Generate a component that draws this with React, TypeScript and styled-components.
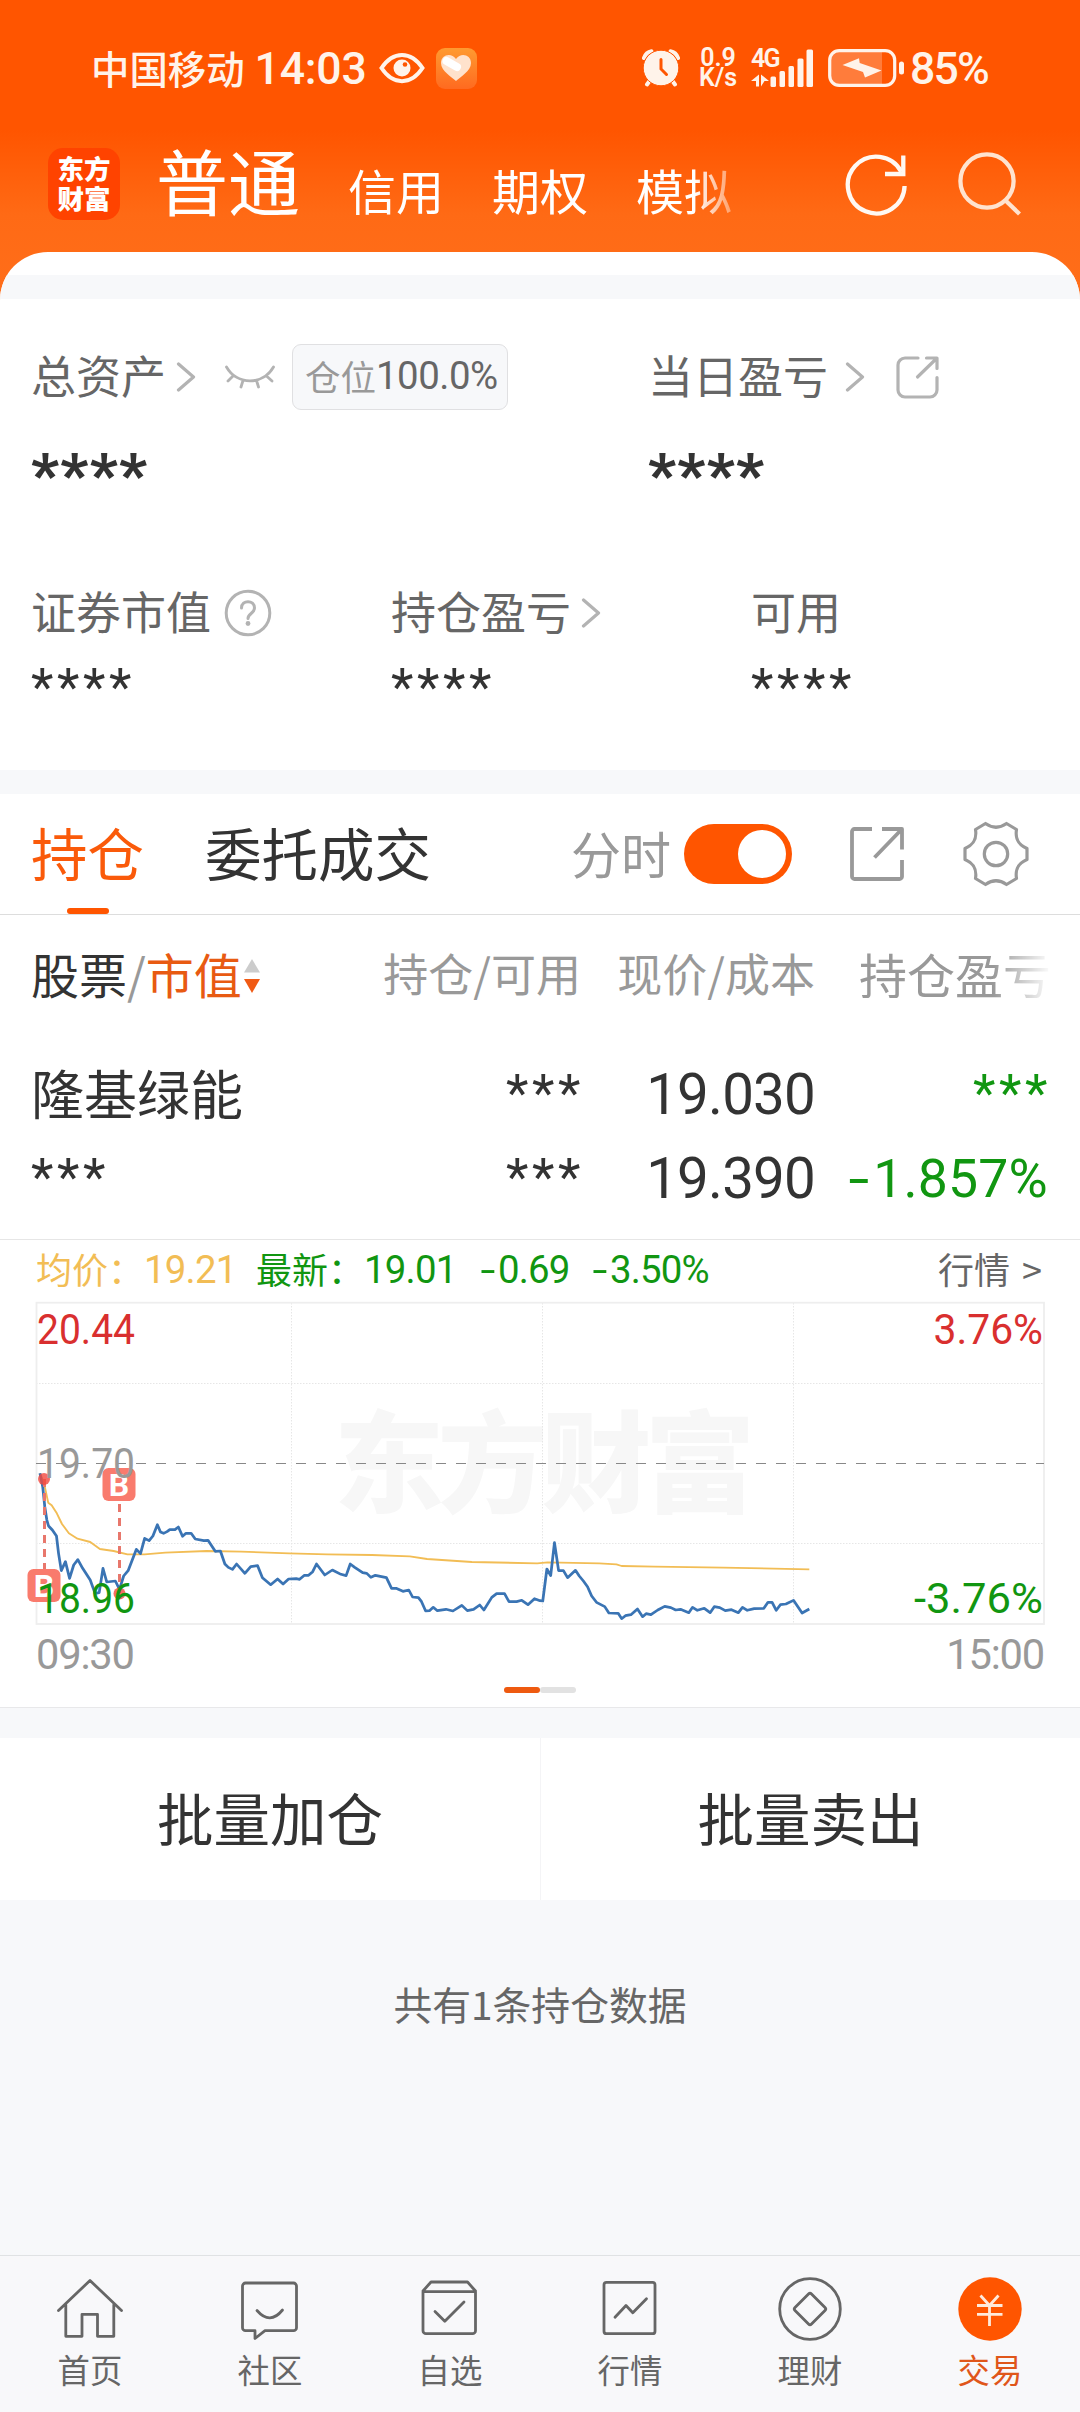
import React from "react";
import styled, { createGlobalStyle } from "styled-components";

const CJK = `"Noto Sans CJK SC", "Noto Sans", sans-serif`;
const NUM = `Roboto, "Noto Sans CJK SC", sans-serif`;

const c = {
  brand: "#ff5500",
  ink: "#333333",
  mid: "#666666",
  soft: "#999999",
  faint: "#b3b3b3",
  line: "#dddddd",
  panel: "#f7f8fa",
  green: "#119611",
  red: "#d92f2f",
  gold: "#f2bd55",
  blue: "#3a74b4",
  status: "#fff3ea",
};

const GlobalStyle = createGlobalStyle`
  *, *::before, *::after { box-sizing: border-box; }
  body { margin: 0; background: ${c.panel}; }
  svg { display: block; flex: none; }
`;

const Page = styled.div`
  width: 1080px;
  height: 2412px;
  overflow: hidden;
  display: flex;
  flex-direction: column;
  font-family: ${CJK};
  color: ${c.ink};
  white-space: nowrap;
  background: linear-gradient(#ff5500 0, #ff5500 130px, #ff6a15 215px, #ff6e1a 300px, ${c.panel} 300px);
`;

const Gap = styled.span<{ $w: number }>`
  flex: none;
  width: ${(p) => p.$w}px;
`;

const Minus = styled.span`
  display: inline-block;
  width: 0.52em;
  letter-spacing: 0;
  text-align: center;
  transform: scaleX(1.4);
  &::before {
    content: "";
  }
`;

/* ---------- status bar ---------- */

const StatusBar = styled.div`
  height: 136px;
  flex: none;
  padding: 0 90px 0 91px;
  display: flex;
  align-items: center;
  color: ${c.status};
`;
const Carrier = styled.span`
  font-size: 38.4px;
  font-weight: 500;
  line-height: 40px;
  padding-bottom: 3px;
`;
const Clock = styled.span`
  font: 500 44.5px/46px ${NUM};
  letter-spacing: -0.2px;
  margin: 2px 0 0 10px;
  width: 124px;
`;
const HeartApp = styled.div`
  width: 41px;
  height: 41px;
  margin-left: 11px;
  border-radius: 9px;
  background: linear-gradient(#ff9a30, #ff6a20);
  display: flex;
  align-items: center;
  justify-content: center;
`;
const StatusGroup = styled.div`
  display: flex;
  align-items: center;
  margin-left: auto;
  padding-bottom: 1px;
`;
const Speed = styled.div`
  width: 42px;
  display: flex;
  flex-direction: column;
  align-items: center;
  font: 600 25px/20px ${NUM};
`;
const Signal = styled.div`
  height: 38px;
  margin: 0 14px 0 12px;
  display: flex;
  align-items: flex-end;
`;
const Network = styled.div`
  width: 27px;
  height: 38px;
  display: flex;
  flex-direction: column;
  justify-content: space-between;
  font: 600 25px/20px ${NUM};
  letter-spacing: -1.8px;
`;
const Percent = styled.span`
  font: 500 44.5px/46px ${NUM};
  letter-spacing: -1.8px;
  margin: 3px 0 0 5px;
  width: 80px;
`;

/* ---------- header ---------- */

const TopNav = styled.div`
  height: 116px;
  flex: none;
  padding: 0 57px 20px 48px;
  display: flex;
  align-items: center;
`;
const Logo = styled.div`
  width: 72px;
  height: 72px;
  border-radius: 15px;
  background: #ff4300;
  color: #fff;
  display: flex;
  flex-direction: column;
  align-items: center;
  justify-content: center;
  font-size: 26.5px;
  font-weight: 800;
  line-height: 30px;
  padding-bottom: 3px;
`;
const Accounts = styled.div`
  margin-left: 36px;
  padding-bottom: 10px;
  display: flex;
  align-items: baseline;
  gap: 48px;
  color: #fff;
  mask-image: linear-gradient(90deg, #000 538px, rgba(0, 0, 0, 0.3) 580px);
`;
const Account = styled.span<{ $active?: boolean }>`
  font-size: ${(p) => (p.$active ? 72 : 48)}px;
  line-height: ${(p) => (p.$active ? 72 : 48)}px;
`;
const NavIcons = styled.div`
  margin-left: auto;
  display: flex;
  gap: 45px;
`;

/* ---------- sheet ---------- */

const Sheet = styled.main`
  flex: 1;
  display: flex;
  flex-direction: column;
  border-radius: 48px 48px 0 0;
  overflow: hidden;
  background: #fff;
`;
const Band = styled.div<{ $top?: number; $h: number }>`
  margin-top: ${(p) => p.$top ?? 0}px;
  height: ${(p) => p.$h}px;
  flex: none;
  background: ${c.panel};
`;

const Assets = styled.section`
  height: 471px;
  flex: none;
  padding: 45px 0 0 31px;
`;
const Totals = styled.div`
  display: grid;
  grid-template-columns: 617px 1fr;
`;
const Breakdown = styled.div`
  display: grid;
  grid-template-columns: 360px 360px 1fr;
  margin-top: 75px;
`;
const LabelRow = styled.div`
  height: 66px;
  display: flex;
  align-items: center;
  color: ${c.mid};
`;
const Label = styled.span`
  font-size: 45px;
  line-height: 46px;
  padding-bottom: 5px;
`;
const Badge = styled.span`
  height: 66px;
  width: 216px;
  padding: 0 0 3px 12px;
  border: 1px solid #e0e0e2;
  border-radius: 9px;
  background: ${c.panel};
  display: flex;
  align-items: center;
  font-size: 35.5px;
  line-height: 40px;
  color: ${c.soft};
`;
const BadgeValue = styled.span`
  font: 400 38.4px/40px ${NUM};
  letter-spacing: -0.5px;
  color: ${c.mid};
`;
const Masked = styled.div<{ $bold?: boolean; $green?: boolean }>`
  font: ${(p) => (p.$bold ? "900 60px/60px" : "400 52px/52px")} ${NUM};
  letter-spacing: ${(p) => (p.$bold ? 1.4 : 3.6)}px;
  color: ${(p) => (p.$green ? c.green : c.ink)};
`;
const TotalMask = styled(Masked)`
  margin-top: 35px;
`;
const PartMask = styled(Masked)`
  margin-top: 16px;
`;

/* ---------- positions ---------- */

const Tabs = styled.div`
  height: 121px;
  flex: none;
  padding: 0 50px 0 31px;
  display: flex;
  align-items: center;
  border-bottom: 1px solid ${c.line};
`;
const Tab = styled.div<{ $active?: boolean }>`
  height: 120px;
  margin-right: 61px;
  display: flex;
  flex-direction: column;
  align-items: center;
  padding-top: 24px;
  font-size: 56.5px;
  line-height: 66px;
  color: ${(p) => (p.$active ? "#fa5a0a" : c.ink)};
  &::after {
    content: "";
    width: 42px;
    height: 6px;
    margin-top: 24px;
    border-radius: 3px;
    background: ${(p) => (p.$active ? c.brand : "transparent")};
  }
`;
const TabTools = styled.div`
  margin-left: auto;
  display: flex;
  align-items: center;
`;
const ToolLabel = styled.span`
  font-size: 50px;
  line-height: 50px;
  padding-bottom: 5px;
  color: ${c.soft};
`;
const Toggle = styled.span`
  width: 108px;
  height: 60px;
  margin: 0 57px 0 13px;
  padding-right: 6px;
  border-radius: 30px;
  background: ${c.brand};
  display: flex;
  align-items: center;
  justify-content: flex-end;
  &::after {
    content: "";
    width: 48px;
    height: 48px;
    border-radius: 50%;
    background: #fff;
  }
`;

const Columns = styled.div`
  flex: none;
  display: grid;
  grid-template-columns: 350px 200px 234px 233px;
  padding-left: 31px;
  align-items: center;
`;
const HeadRow = styled(Columns)`
  height: 115px;
  font-size: 45px;
  color: ${c.soft};
  line-height: 50px;
`;
const HeadCell = styled.span<{ $fade?: boolean }>`
  justify-self: end;
  ${(p) =>
    p.$fade &&
    `font-size: 48px; margin-right: -3px;
     mask-image: linear-gradient(90deg, #000 134px, rgba(0, 0, 0, 0.05) 190px);`}
`;
const HeadName = styled.span`
  display: flex;
  align-items: center;
  font-size: 48px;
  color: ${c.ink};
`;
const Slash = styled.i`
  font: 400 48px/50px ${CJK};
  color: ${c.soft};
`;
const SortKey = styled.b`
  font-weight: 400;
  color: #e85a12;
`;
const DataRow = styled(Columns)<{ $top?: number }>`
  height: 84px;
  margin-top: ${(p) => p.$top ?? 0}px;
`;
const StockName = styled.span`
  font-size: 53px;
  line-height: 60px;
  padding-bottom: 6px;
`;
const Cell = styled.span<{ $green?: boolean }>`
  justify-self: end;
  font: 400 ${(p) => (p.$green ? 53.5 : 56.5)}px/60px ${NUM};
  letter-spacing: ${(p) => (p.$green ? 0.2 : -0.8)}px;
  color: ${(p) => (p.$green ? c.green : c.ink)};
`;
const MaskCell = styled(Masked)<{ $start?: boolean }>`
  justify-self: ${(p) => (p.$start ? "start" : "end")};
  margin-right: ${(p) => (p.$start ? 0 : -3)}px;
  padding-bottom: 3px;
`;

/* ---------- intraday chart ---------- */

const Quote = styled.div`
  height: 54px;
  flex: none;
  margin-top: 18px;
  border-top: 1px solid #e6e6e6;
  padding: 3px 38px 0 36px;
  display: flex;
  align-items: center;
  font-size: 36px;
  line-height: 50px;
`;
const QuoteItem = styled.span<{ $tone: string; $w: number }>`
  width: ${(p) => p.$w}px;
  display: flex;
  align-items: center;
  color: ${(p) => p.$tone};
`;
const QuoteNum = styled.span`
  font: 400 38.4px/50px ${NUM};
  letter-spacing: -0.8px;
  padding-top: 3px;
`;
const QuoteLink = styled.span`
  margin-left: auto;
  word-spacing: 4px;
  color: ${c.mid};
`;
const Times = styled.div`
  height: 42px;
  flex: none;
  padding: 0 36px 0 36px;
  display: flex;
  justify-content: space-between;
  font: 400 41.7px/43px ${NUM};
  letter-spacing: -1.2px;
  color: ${c.soft};
`;
const Pager = styled.div`
  height: 33px;
  flex: none;
  padding-top: 12px;
  display: flex;
  justify-content: center;
  border-bottom: 1px solid #e8e8ea;
`;
const Dot = styled.span<{ $on?: boolean }>`
  width: 36px;
  height: 6px;
  border-radius: 3px;
  background: ${(p) => (p.$on ? "#ee5a10" : "#e2e2e2")};
`;

const Actions = styled.div`
  flex: none;
  height: 162px;
  display: grid;
  grid-template-columns: 1fr 1fr;
`;
const Action = styled.div`
  display: flex;
  align-items: center;
  justify-content: center;
  padding-bottom: 6px;
  font-size: 56.5px;
  & + & {
    border-left: 1px solid #f4f4f6;
  }
`;
const Summary = styled.div`
  flex: 1;
  background: ${c.panel};
  padding-top: 75px;
  text-align: center;
  font-size: 38.8px;
  line-height: 56px;
  color: ${c.mid};
`;

const TabBar = styled.nav`
  height: 157px;
  flex: none;
  border-top: 1px solid #e0e2e4;
  background: #f8f8fa;
  display: grid;
  grid-template-columns: repeat(6, 1fr);
`;
const TabItem = styled.div<{ $active?: boolean }>`
  display: flex;
  flex-direction: column;
  align-items: center;
  padding-top: 20px;
  gap: 7px;
  font-size: 32.4px;
  line-height: 40px;
  color: ${(p) => (p.$active ? "#e0561a" : c.mid)};
`;

/* ---------- drawings ---------- */

const Chevron = () => (
  <svg width="20" height="30" viewBox="0 0 20 30" fill="none" stroke={c.faint} strokeWidth="3.2" strokeLinecap="round" strokeLinejoin="round">
    <path d="M2.5 2 17.5 15 2.5 28" />
  </svg>
);

const ClosedEye = () => (
  <svg width="50" height="24" viewBox="0 0 50 24" fill="none" stroke={c.faint} strokeWidth="2.8" strokeLinecap="round">
    <path d="M1.5 2C12 20.500 38 20.500 48.500 2M8 11 3 16M18 15.500 16 22M31.500 15.500 33.500 22M41.500 11 47 16" />
  </svg>
);

const ShareRound = () => (
  <svg width="44" height="44" viewBox="0 0 44 44" fill="none" stroke={c.faint} strokeWidth="3.2" strokeLinecap="round" strokeLinejoin="round">
    <path d="M22 3H9a7 7 0 0 0-7 7v25a7 7 0 0 0 7 7h25a7 7 0 0 0 7-7V22.500" />
    <path d="M30.500 3H41V13.500M40.500 3.500 21.500 22" />
  </svg>
);

const ShareSquare = () => (
  <svg width="56" height="56" viewBox="0 0 56 56" fill="none" stroke={c.soft} strokeWidth="3.8" strokeLinejoin="round">
    <path d="M23 3H5.500a2.500 2.500 0 0 0-2.500 2.500V50.500a2.500 2.500 0 0 0 2.500 2.500H50.500a2.500 2.500 0 0 0 2.500-2.500V34" />
    <path d="M33 3H53V23.500M53 3 25.500 31.500" />
  </svg>
);

const Gear = () => (
  <svg width="68" height="68" viewBox="0 0 68 68" fill="none" stroke={c.soft} strokeWidth="3.200" strokeLinejoin="round">
    <path d="M23.500 3.500Q34 11 44.500 3.500L54.500 9.500C53 19 56 24.500 65 28.500V39.500C56 43.500 53 49 54.500 58.500L44.500 64.500Q34 57 23.500 64.500L13.500 58.500C15 49 12 43.500 3 39.500V28.500C12 24.500 15 19 13.500 9.500Z" />
    <circle cx="34" cy="34" r="11.700" />
  </svg>
);

const Help = () => (
  <svg width="48" height="48" viewBox="0 0 48 48" fill="none" stroke={c.faint} strokeWidth="3">
    <circle cx="24" cy="24" r="21.800" />
    <path d="M17.500 19c0-8.500 13-8.500 13 0 0 5.500-6.500 5.500-6.500 10.500" strokeLinecap="round" />
    <circle cx="24" cy="34.500" r="2.400" fill={c.faint} stroke="none" />
  </svg>
);

const SortSvg = styled.svg`
  margin: 7px 0 0 1px;
`;
const SortArrows = () => (
  <SortSvg width="18" height="36" viewBox="0 0 18 36">
    <path d="M9 1 17 14.500H1Z" fill="#cccccc" />
    <path d="M9 35 17 21H1Z" fill="#f05a14" />
  </SortSvg>
);

const EyeOpen = () => (
  <svg width="46" height="32" viewBox="0 0 46 32">
    <path d="M2.500 16C14-1.500 32-1.500 43.500 16 32 33.500 14 33.500 2.500 16Z" fill="none" stroke={c.status} strokeWidth="4" />
    <circle cx="23" cy="16" r="8.500" fill={c.status} />
    <circle cx="26" cy="12.500" r="2.300" fill={c.brand} />
  </svg>
);

const Heart = () => (
  <svg width="32" height="28" viewBox="0 0 32 28">
    <path d="M16 27C12 23 1 17 1 9 1 1 11-2 16 5 21-2 31 1 31 9 31 17 20 23 16 27Z" fill="#ffe2cc" />
    <path d="M6.500 7 17 13" stroke="#fff" strokeWidth="8" strokeLinecap="round" />
  </svg>
);

const Alarm = () => (
  <svg width="38" height="38" viewBox="0 0 38 38">
    <g fill="none" stroke={c.status} strokeWidth="4" strokeLinecap="round">
      <path d="M2 9Q4 3 9.500 2.200M28.500 2.200Q34 3 36 9M9 30 5 35.500M29 30 33 35.500" />
    </g>
    <circle cx="19" cy="19" r="17.800" fill={c.status} stroke={c.brand} strokeWidth="1" />
    <path d="M19 10.500V20L24.500 25.500" fill="none" stroke={c.brand} strokeWidth="3" strokeLinecap="round" />
  </svg>
);

const Battery = () => (
  <svg width="77" height="38" viewBox="0 0 77 38">
    <path d="M11 2H54V36H11A8 8 0 0 1 3 28V10A8 8 0 0 1 11 2Z" fill="#ff7c3b" />
    <rect x="1.700" y="1.700" width="65" height="34.600" rx="9.500" fill="none" stroke={c.status} strokeWidth="3.200" />
    <rect x="71" y="12.500" width="5" height="13" rx="2.500" fill={c.status} />
    <path d="M14.500 16 31 9.300 31.700 14 53.500 21.500 37 28.500 35 23Z" fill={c.status} />
  </svg>
);

const DataArrows = () => (
  <svg width="18" height="13" viewBox="0 0 18 13" fill={c.status}>
    <path d="M8 0.500V12.500H5V7H0ZM10 12.500V0.500L18 7H13.500Z" />
  </svg>
);

const BarsSvg = styled.svg`
  margin-left: -8px;
`;
const SignalBars = () => (
  <BarsSvg width="44" height="38" viewBox="0 0 44 38" fill={c.status}>
    <rect x="0.500" y="27.500" width="5.500" height="10.500" rx="1.500" />
    <rect x="9.500" y="22" width="5.500" height="16" rx="1.500" />
    <rect x="18.500" y="17" width="5.500" height="21" rx="1.500" />
    <rect x="27.500" y="9.500" width="6" height="28.500" rx="1.500" />
    <rect x="36.500" y="0.500" width="6.500" height="37.500" rx="1.500" />
  </BarsSvg>
);

const Refresh = () => (
  <svg width="68" height="68" viewBox="0 0 68 68" fill="none" stroke="#fff8f2" strokeWidth="4.300">
    <path d="M62.600 36A28.400 28.400 0 1 1 59.300 21.700" />
    <path d="M61.300 5.500V24H43" />
  </svg>
);

const Search = () => (
  <svg width="68" height="68" viewBox="0 0 68 68" fill="none" stroke="#ffe3cf" strokeWidth="4.300">
    <circle cx="32" cy="31" r="26.600" />
    <path d="M50 50 64.500 64" />
  </svg>
);

const NavIcon = ({ children }: { children: React.ReactNode }) => (
  <svg width="66" height="66" viewBox="0 0 66 66" fill="none" stroke={c.mid} strokeWidth="2.8" strokeLinecap="round" strokeLinejoin="round">
    {children}
  </svg>
);

const navItems = [
  { label: "首页", icon: <path d="M1.5 34.500 33 4.500 64.500 34.500M8.800 28.700V60.300H25V38.300H40.500V60.300H56.800V28.700" /> },
  {
    label: "社区",
    icon: (
      <>
        <path d="M8.5 7H56.500a3 3 0 0 1 3 3V51.700a3 3 0 0 1-3 3H28L18 62.500V54.700H8.500a3 3 0 0 1-3-3V10a3 3 0 0 1 3-3Z" />
        <path d="M20 34.500Q33 49.500 45.500 34" />
      </>
    ),
  },
  {
    label: "自选",
    icon: (
      <>
        <path d="M6 15.700V54.700a3 3 0 0 0 3 3H55.500a3 3 0 0 0 3-3V15.700ZM6 15 14 6H50.500L58.500 15" />
        <path d="M18 35.500 27.800 45.300 47 26" />
      </>
    ),
  },
  {
    label: "行情",
    icon: (
      <>
        <rect x="7" y="6.300" width="51" height="51.400" rx="2.500" />
        <path d="M18 41.300 29 29.500 35.800 36.700 49.500 22.700" />
      </>
    ),
  },
  {
    label: "理财",
    icon: (
      <>
        <circle cx="33" cy="33" r="30.300" />
        <path d="M31.500 18Q33 16.500 34.500 18L48 31.500Q49.500 33 48 34.500L34.500 48Q33 49.500 31.500 48L18 34.500Q16.500 33 18 31.500Z" />
      </>
    ),
  },
  {
    label: "交易",
    active: true,
    icon: (
      <>
        <circle cx="33" cy="33" r="31.700" fill={c.brand} stroke="none" />
        <path d="M23.5 19.500 32.500 29.500 41.500 19.500M20 29.500H45.500M20 38.300H45.500M32.500 29.500V50" stroke="#ffeadb" strokeLinecap="butt" />
      </>
    ),
  },
];

/* Samples in plot space; the drawing group scales them to pixels. */
const price =
  "116,760 124,800 130,860 136,900 141,918 152,930 164,948 170,1000 178,1052 190,1025 202,1075 214,1035 226,1019 240,1045 262,1080 276,1120 288,1118 299,1045 310,1086 335,1083 347,1108 359,1068 372,1052 396,988 408,1001 420,955 433,962 444,948 457,914 466,936 475,940 485,935 493,929 508,929 518,921 530,949 540,940 555,940 567,957 592,962 604,961 625,994 640,993 653,1032 663,1042 675,1048 687,1032 711,1060 728,1040 748,1037 762,1073 786,1094 806,1077 822,1092 838,1077 860,1076 870,1078 884,1066 896,1066 908,1055 919,1032 943,1065 965,1050 990,1063 1005,1067 1017,1032 1030,1042 1053,1058 1065,1060 1077,1072 1090,1066 1122,1073 1137,1105 1150,1105 1170,1114 1187,1110 1198,1131 1215,1133 1224,1145 1236,1173 1247,1172 1258,1162 1270,1172 1295,1168 1315,1173 1341,1156 1357,1172 1375,1168 1393,1155 1405,1170 1428,1132 1442,1121 1465,1121 1478,1145 1500,1145 1515,1141 1533,1154 1552,1136 1568,1142 1576,1143 1588,1047 1599,1067 1610,968 1622,1052 1636,1052 1648,1073 1671,1051 1682,1068 1694,1083 1706,1100 1718,1128 1732,1147 1756,1160 1768,1179 1795,1180 1805,1196 1816,1187 1832,1184 1851,1167 1866,1190 1876,1181 1890,1184 1910,1170 1930,1159 1948,1163 1962,1170 1976,1168 2000,1178 2011,1162 2025,1171 2045,1165 2062,1178 2074,1160 2090,1163 2106,1172 2124,1169 2144,1178 2156,1162 2170,1171 2190,1166 2218,1165 2230,1147 2242,1147 2254,1171 2266,1154 2282,1152 2304,1141 2329,1179 2350,1167";
const average =
  "116,760 128,790 140,848 150,856 165,880 180,912 200,940 225,956 262,966 290,987 330,993 370,1003 420,1003 480,998 600,993 700,995 840,1000 950,1003 1080,1005 1190,1009 1240,1017 1370,1026 1560,1030 1590,1027 1740,1030 1790,1033 1805,1038 1900,1040 2100,1043 2350,1048";

const AxisText = styled.text.attrs({ lengthAdjust: "spacingAndGlyphs" })<{ $tone: string }>`
  font: 400 41.7px ${NUM};
  fill: ${(p) => p.$tone};
`;
const Watermark = styled.text`
  font: 900 110px ${CJK};
  fill: #f7f7f7;
`;
const BuyLetter = styled.text`
  font: 700 32px ${NUM};
  fill: #fff;
`;

const BuyMark = ({ x, y }: { x: number; y: number }) => (
  <g transform={`translate(${x} ${y})`}>
    <rect width="33" height="33" rx="6" fill="#f97b6d" />
    <BuyLetter x="16.5" y="28" textAnchor="middle">B</BuyLetter>
  </g>
);

const Intraday = () => (
  <svg width="1080" height="340" viewBox="0 0 1080 340">
    <Watermark x="334" y="211" textLength="421">东方财富</Watermark>
    <g fill="none" stroke="#e6e6e6" strokeWidth="1" strokeDasharray="1.5 1.5">
      <path d="M36 90.500H1044M36 250.500H1044M291.500 10V331M542.500 10V331M793.500 10V331" />
    </g>
    <rect x="36.500" y="9.700" width="1007.500" height="321.300" fill="none" stroke="#eeeeee" strokeWidth="1.800" />
    <path d="M36 170.500H1044" stroke="#888888" strokeWidth="1.200" strokeDasharray="10 10" />
    <g transform="translate(0 -73) scale(0.34439 0.33333)" fill="none" strokeLinejoin="round">
      <polyline points={average} stroke={c.gold} strokeWidth="5.500" />
      <polyline points={price} stroke={c.blue} strokeWidth="8" />
    </g>
    <g stroke="#e8776c" strokeWidth="3" strokeDasharray="8 6">
      <path d="M44.500 186V276M119.500 211V300" />
    </g>
    <g fill="#f2493f" fillOpacity="0.8">
      <circle cx="44" cy="186" r="6" />
      <circle cx="119.500" cy="300.500" r="6" />
    </g>
    <BuyMark x={27.5} y={276} />
    <BuyMark x={102.5} y={175} />
    <AxisText $tone={c.red} x="37" y="51" textLength="98">20.44</AxisText>
    <AxisText $tone={c.soft} x="37" y="185" textLength="98">19.70</AxisText>
    <AxisText $tone={c.green} x="37" y="320" textLength="98">18.96</AxisText>
    <AxisText $tone={c.red} x="933.500" y="51" textLength="109.500">3.76%</AxisText>
    <AxisText $tone={c.green} x="914" y="320" textLength="129">-3.76%</AxisText>
  </svg>
);

export default function App() {
  return (
    <Page>
      <GlobalStyle />
      <StatusBar>
        <Carrier>中国移动</Carrier>
        <Clock>14:03</Clock>
        <EyeOpen />
        <HeartApp>
          <Heart />
        </HeartApp>
        <StatusGroup>
          <Alarm />
          <Gap $w={17} />
          <Speed>
            <span>0.9</span>
            <span>K/s</span>
          </Speed>
          <Signal>
            <Network>
              <span>4G</span>
              <DataArrows />
            </Network>
            <SignalBars />
          </Signal>
          <Battery />
          <Percent>85%</Percent>
        </StatusGroup>
      </StatusBar>

      <TopNav>
        <Logo>
          <span>东方</span>
          <span>财富</span>
        </Logo>
        <Accounts>
          <Account $active>普通</Account>
          <Account>信用</Account>
          <Account>期权</Account>
          <Account>模拟</Account>
        </Accounts>
        <NavIcons>
          <Refresh />
          <Search />
        </NavIcons>
      </TopNav>

      <Sheet>
        <Band $top={23} $h={24} />
        <Assets>
          <Totals>
            <div>
              <LabelRow>
                <Label>总资产</Label>
                <Gap $w={10} />
                <Chevron />
                <Gap $w={29} />
                <ClosedEye />
                <Gap $w={17} />
                <Badge>
                  仓位<BadgeValue>100.0%</BadgeValue>
                </Badge>
              </LabelRow>
              <TotalMask $bold>****</TotalMask>
            </div>
            <div>
              <LabelRow>
                <Label>当日盈亏</Label>
                <Gap $w={17} />
                <Chevron />
                <Gap $w={31} />
                <ShareRound />
              </LabelRow>
              <TotalMask $bold>****</TotalMask>
            </div>
          </Totals>
          <Breakdown>
            <div>
              <LabelRow>
                <Label>证券市值</Label>
                <Gap $w={13} />
                <Help />
              </LabelRow>
              <PartMask>****</PartMask>
            </div>
            <div>
              <LabelRow>
                <Label>持仓盈亏</Label>
                <Gap $w={10} />
                <Chevron />
              </LabelRow>
              <PartMask>****</PartMask>
            </div>
            <div>
              <LabelRow>
                <Label>可用</Label>
              </LabelRow>
              <PartMask>****</PartMask>
            </div>
          </Breakdown>
        </Assets>
        <Band $h={24} />

        <Tabs>
          <Tab $active>持仓</Tab>
          <Tab>委托成交</Tab>
          <TabTools>
            <ToolLabel>分时</ToolLabel>
            <Toggle />
            <ShareSquare />
            <Gap $w={57} />
            <Gear />
          </TabTools>
        </Tabs>

        <HeadRow>
          <HeadName>
            股票<Slash>/</Slash>
            <SortKey>市值</SortKey>
            <SortArrows />
          </HeadName>
          <HeadCell>持仓/可用</HeadCell>
          <HeadCell>现价/成本</HeadCell>
          <HeadCell $fade>持仓盈亏</HeadCell>
        </HeadRow>
        <DataRow $top={23}>
          <StockName>隆基绿能</StockName>
          <MaskCell>***</MaskCell>
          <Cell>19.030</Cell>
          <MaskCell $green>***</MaskCell>
        </DataRow>
        <DataRow>
          <MaskCell $start>***</MaskCell>
          <MaskCell>***</MaskCell>
          <Cell>19.390</Cell>
          <Cell $green>
            <Minus>-</Minus>1.857%
          </Cell>
        </DataRow>

        <Quote>
          <QuoteItem $tone={c.gold} $w={220}>
            均价：<QuoteNum>19.21</QuoteNum>
          </QuoteItem>
          <QuoteItem $tone={c.green} $w={222}>
            最新：<QuoteNum>19.01</QuoteNum>
          </QuoteItem>
          <QuoteItem $tone={c.green} $w={112}>
            <QuoteNum>
              <Minus>-</Minus>0.69
            </QuoteNum>
          </QuoteItem>
          <QuoteItem $tone={c.green} $w={130}>
            <QuoteNum>
              <Minus>-</Minus>3.50%
            </QuoteNum>
          </QuoteItem>
          <QuoteLink>行情 &gt;</QuoteLink>
        </Quote>
        <Intraday />
        <Times>
          <span>09:30</span>
          <span>15:00</span>
        </Times>
        <Pager>
          <Dot $on />
          <Dot />
        </Pager>
        <Band $h={30} />

        <Actions>
          <Action>批量加仓</Action>
          <Action>批量卖出</Action>
        </Actions>
        <Summary>共有1条持仓数据</Summary>
      </Sheet>

      <TabBar>
        {navItems.map((item) => (
          <TabItem key={item.label} $active={item.active}>
            <NavIcon>{item.icon}</NavIcon>
            <span>{item.label}</span>
          </TabItem>
        ))}
      </TabBar>
    </Page>
  );
}
